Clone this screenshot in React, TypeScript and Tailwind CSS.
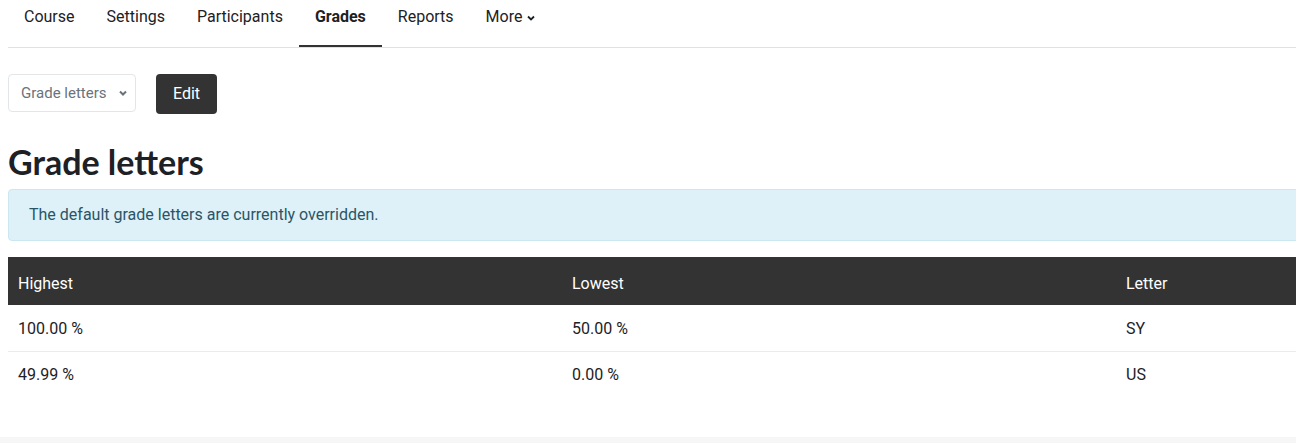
import React from 'react';

const tabs = ['Course', 'Settings', 'Participants', 'Grades', 'Reports'];

const rows = [
    { highest: '100.00 %', lowest: '50.00 %', letter: 'SY' },
    { highest: '49.99 %', lowest: '0.00 %', letter: 'US' },
];

export default function App() {
    return (
        <div className="w-full h-[443px] overflow-hidden bg-white text-[#1d2125] font-['Roboto',sans-serif] text-[16px]">
            <div className="w-[1670px] pl-2">
                {/* secondary navigation */}
                <nav className="flex border-b border-[#dee2e6] h-[48px]">
                    {tabs.map(tab => (
                        <div
                            key={tab}
                            className={`relative px-4 pt-[6px] leading-[22px] ${tab === 'Grades' ? 'font-bold text-[#1d2125]' : 'text-[#1d2125]'}`}
                        >
                            {tab}
                            {tab === 'Grades' && (
                                <span className="absolute left-0 right-0 bottom-0 h-[2px] bg-[#333333]" />
                            )}
                        </div>
                    ))}
                    <div className="px-4 pt-[6px] leading-[22px] flex items-start gap-1">
                        More
                        <svg className="w-[10px] h-[10px] mt-[7px]" viewBox="0 0 10 10" fill="none" stroke="currentColor" strokeWidth="1.8"><path d="M2 3.5l3 3 3-3" /></svg>
                    </div>
                </nav>

                {/* action bar */}
                <div className="flex items-start gap-5 mt-[26px]">
                    <div className="h-[38px] w-[128px] border border-[#e3e6e9] rounded flex items-center pl-3 gap-[11px] text-[15px] text-[#6a737b]">
                        Grade letters
                        <svg className="w-[10px] h-[10px]" viewBox="0 0 10 10" fill="none" stroke="currentColor" strokeWidth="2"><path d="M2 3.5l3 3 3-3" /></svg>
                    </div>
                    <button className="h-[40px] px-[17px] rounded bg-[#333333] text-white text-[16px]">Edit</button>
                </div>

                <h2 className="mt-[28px] font-['Lato',sans-serif] font-bold text-[34px] leading-[40px] text-[#1d2125]">Grade letters</h2>

                <div className="mt-[7px] h-[52px] bg-[#def1f8] border border-[#cbe7f1] rounded flex items-center pl-5 text-[#2a5566]">
                    The default grade letters are currently overridden.
                </div>

                <table className="mt-4 w-[1662px] text-left table-fixed">
                    <thead className="bg-[#333333] text-white">
                        <tr className="h-[48px]">
                            <th className="font-normal pl-[10px] pt-[5px]">Highest</th>
                            <th className="font-normal pl-[10px] pt-[5px]">Lowest</th>
                            <th className="font-normal pl-[10px] pt-[5px]">Letter</th>
                        </tr>
                    </thead>
                    <tbody>
                        {rows.map((row, i) => (
                            <tr key={row.letter} className={`h-[46px] ${i > 0 ? 'border-t border-[#e9ecef]' : ''}`}>
                                <td className="pl-[10px] pt-[2px]">{row.highest}</td>
                                <td className="pl-[10px] pt-[2px]">{row.lowest}</td>
                                <td className="pl-[10px] pt-[2px]">{row.letter}</td>
                            </tr>
                        ))}
                    </tbody>
                </table>
            </div>
            <div className="mt-[40px] h-[20px] bg-[#f6f6f6]" />
        </div>
    );
}
